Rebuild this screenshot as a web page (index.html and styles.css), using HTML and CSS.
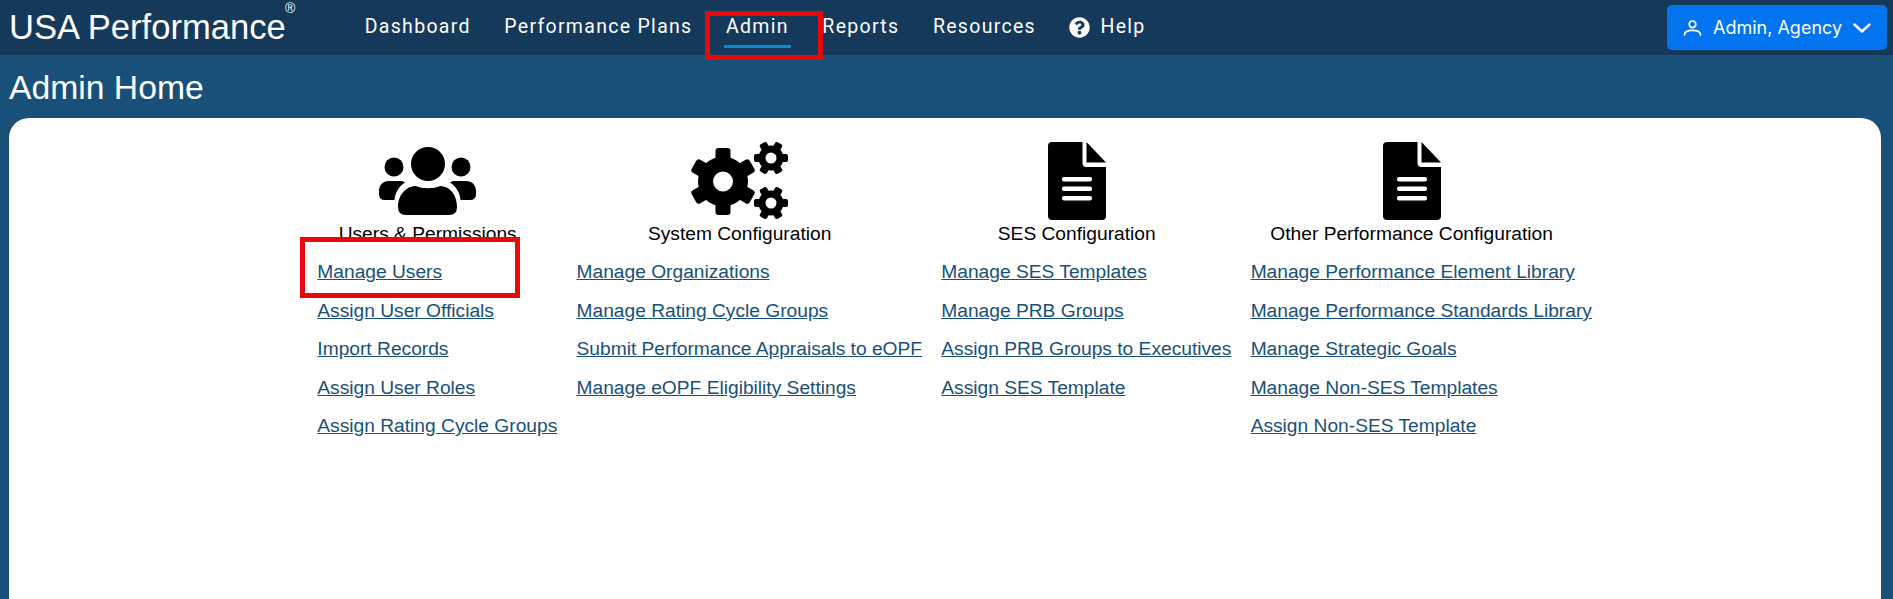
FILE: index.html
```html
<!DOCTYPE html>
<html lang="en">
<head>
    <meta charset="UTF-8">
    <title>USA Performance - Admin Home</title>
    <link rel="stylesheet" href="styles.css">
</head>
<body>
    <header class="top-bar">
        <a class="logo" href="#">USA Performance<sup>&reg;</sup></a>
        <nav class="main-nav">
            <a href="#">Dashboard</a>
            <a href="#">Performance Plans</a>
            <a href="#" class="active">Admin</a>
            <a href="#">Reports</a>
            <a href="#">Resources</a>
            <a href="#" class="help-link">
                <svg class="help-icon" viewBox="0 0 512 512"><path fill="#fff" d="M504 256c0 136.997-111.043 248-248 248S8 392.997 8 256C8 119.083 119.043 8 256 8s248 111.083 248 248zM262.655 90c-54.497 0-89.255 22.957-116.549 63.758-3.536 5.286-2.353 12.415 2.715 16.258l34.699 26.31c5.205 3.947 12.621 3.008 16.665-2.122 17.864-22.658 30.113-35.797 57.303-35.797 20.429 0 45.698 13.148 45.698 32.958 0 14.976-12.363 22.667-32.534 33.976C247.128 238.528 216 254.941 216 296v4c0 6.627 5.373 12 12 12h56c6.627 0 12-5.373 12-12v-1.333c0-28.462 83.186-29.647 83.186-106.667 0-58.002-60.165-102-116.531-102zM256 338c-25.365 0-46 20.635-46 46 0 25.364 20.635 46 46 46s46-20.636 46-46c0-25.365-20.635-46-46-46z"/></svg>
                Help
            </a>
        </nav>
        <button class="user-button">
            <svg class="user-icon" viewBox="0 0 18 16" fill="none" stroke="#fff" stroke-width="1.7" stroke-linecap="round"><circle cx="9" cy="4.3" r="3.3"/><path d="M1 15c0-3 2.6-4.6 8-4.6s8 1.600 8 4.600"/></svg>
            <span>Admin, Agency</span>
            <svg class="chevron" viewBox="0 0 18 10" fill="none" stroke="#fff" stroke-width="2.400" stroke-linecap="round" stroke-linejoin="round"><path d="M1.500 1.500 9 8.500l7.500-7"/></svg>
        </button>
    </header>

    <h1 class="page-title">Admin Home</h1>

    <main class="content-card">
        <section class="admin-col">
            <svg class="col-icon" width="97" height="80" viewBox="0 -6 97 80">
                <circle cx="49" cy="17" r="17"/>
                <circle cx="15" cy="20" r="9.500"/>
                <circle cx="82" cy="20" r="9.500"/>
                <path d="M19 60C19 48 27 39 37 39C43 42 55 42 61 39C71 39 78 48 78 60Q78 68 70 68H27Q19 68 19 60Z"/>
                <path d="M0 44C0 38 4 34 10 34H22Q25 34 26 35.500C20 39 16 46 15.500 53H6Q0 53 0 47Z"/>
                <path d="M97 44C97 38 93 34 87 34H75Q72 34 71 35.500C77 39 81 46 81.500 53H91Q97 53 97 47Z"/>
            </svg>
            <h2>Users &amp; Permissions</h2>
            <ul>
                <li><a href="#">Manage Users</a></li>
                <li><a href="#">Assign User Officials</a></li>
                <li><a href="#">Import Records</a></li>
                <li><a href="#">Assign User Roles</a></li>
                <li><a href="#">Assign Rating Cycle Groups</a></li>
            </ul>
        </section>
        <section class="admin-col">
            <svg class="col-icon" width="97" height="80" viewBox="0 0 97 80">
                <g transform="translate(32 40.500)">
                    <circle r="25"/>
                    <rect x="-7.500" y="-33.500" width="15" height="67" rx="3"/>
                    <rect x="-7.500" y="-33.500" width="15" height="67" rx="3" transform="rotate(60)"/>
                    <rect x="-7.500" y="-33.500" width="15" height="67" rx="3" transform="rotate(120)"/>
                    <circle r="10" fill="#fff"/>
                </g>
                <g transform="translate(80 17)">
                    <circle r="12.500"/>
                    <rect x="-4" y="-17" width="8" height="34" rx="2" transform="rotate(30)"/>
                    <rect x="-4" y="-17" width="8" height="34" rx="2" transform="rotate(90)"/>
                    <rect x="-4" y="-17" width="8" height="34" rx="2" transform="rotate(150)"/>
                    <circle r="5.500" fill="#fff"/>
                </g>
                <g transform="translate(80 62)">
                    <circle r="12.500"/>
                    <rect x="-4" y="-17" width="8" height="34" rx="2" transform="rotate(30)"/>
                    <rect x="-4" y="-17" width="8" height="34" rx="2" transform="rotate(90)"/>
                    <rect x="-4" y="-17" width="8" height="34" rx="2" transform="rotate(150)"/>
                    <circle r="5.500" fill="#fff"/>
                </g>
            </svg>
            <h2>System Configuration</h2>
            <ul>
                <li><a href="#">Manage Organizations</a></li>
                <li><a href="#">Manage Rating Cycle Groups</a></li>
                <li><a href="#">Submit Performance Appraisals to eOPF</a></li>
                <li><a href="#">Manage eOPF Eligibility Settings</a></li>
            </ul>
        </section>
        <section class="admin-col">
            <svg class="col-icon" width="58" height="80" viewBox="0 0 58 80">
                <path d="M4 1H34.500V22Q34.500 26 38.500 26H58V75Q58 79 54 79H4Q0 79 0 75V5Q0 1 4 1Z"/>
                <path d="M38.500 1 58 21.500H38.500Z"/>
                <rect x="14" y="36" width="30" height="4.500" rx="2" fill="#fff"/>
                <rect x="14" y="45.500" width="30" height="4.500" rx="2" fill="#fff"/>
                <rect x="14" y="55" width="30" height="4.500" rx="2" fill="#fff"/>
            </svg>
            <h2>SES Configuration</h2>
            <ul>
                <li><a href="#">Manage SES Templates</a></li>
                <li><a href="#">Manage PRB Groups</a></li>
                <li><a href="#">Assign PRB Groups to Executives</a></li>
                <li><a href="#">Assign SES Template</a></li>
            </ul>
        </section>
        <section class="admin-col">
            <svg class="col-icon" width="58" height="80" viewBox="0 0 58 80">
                <path d="M4 1H34.500V22Q34.500 26 38.500 26H58V75Q58 79 54 79H4Q0 79 0 75V5Q0 1 4 1Z"/>
                <path d="M38.500 1 58 21.500H38.500Z"/>
                <rect x="14" y="36" width="30" height="4.500" rx="2" fill="#fff"/>
                <rect x="14" y="45.500" width="30" height="4.500" rx="2" fill="#fff"/>
                <rect x="14" y="55" width="30" height="4.500" rx="2" fill="#fff"/>
            </svg>
            <h2>Other Performance Configuration</h2>
            <ul>
                <li><a href="#">Manage Performance Element Library</a></li>
                <li><a href="#">Manage Performance Standards Library</a></li>
                <li><a href="#">Manage Strategic Goals</a></li>
                <li><a href="#">Manage Non-SES Templates</a></li>
                <li><a href="#">Assign Non-SES Template</a></li>
            </ul>
        </section>
    </main>

    <!-- red callouts drawn over the page -->
    <div class="callout callout-nav"></div>
    <div class="callout callout-link"></div>
</body>
</html>
```
FILE: styles.css
```css
html, body {
    height: 100%;
}

body {
    margin: 0;
    position: relative;
    display: flex;
    flex-direction: column;
    overflow: hidden;
    background-color: #18507a;
    font-family: "Liberation Sans", Arial, sans-serif;
}

a {
    text-decoration: none;
}

.top-bar {
    display: flex;
    align-items: flex-start;
    height: 55px;
    flex-shrink: 0;
    background-color: #15395b;
}

.logo {
    position: relative;
    margin: 7px 0 0 9px;
    font-size: 34.600px;
    line-height: 40px;
    color: white;
}

.logo sup {
    position: absolute;
    top: -7px;
    left: 276px;
    font-size: 14px;
    line-height: 16px;
}

.main-nav {
    display: flex;
    margin-left: 77px;
    gap: 29.500px;
    font-family: Roboto, sans-serif;
}

.main-nav a {
    display: flex;
    align-items: flex-start;
    height: 48px;
    box-sizing: border-box;
    padding: 15px 2px 0;
    border-bottom: 3px solid transparent;
    font-size: 19.500px;
    line-height: 24px;
    letter-spacing: 1.300px;
    color: white;
}

.main-nav a.active {
    border-bottom-color: #0a8ad0;
}

.help-icon {
    width: 21px;
    height: 21px;
    margin: 2px 10px 0 0;
}

.user-button {
    display: flex;
    align-items: center;
    margin: 5px 6px 0 auto;
    width: 220px;
    height: 45px;
    padding: 0 0 0 16px;
    border: none;
    border-radius: 5px;
    background-color: #0274f0;
    color: white;
    font-family: Inter, sans-serif;
    font-size: 18px;
}

.user-icon {
    width: 19px;
    height: 16px;
    margin-right: 11px;
}

.chevron {
    width: 18px;
    height: 10px;
    margin-left: 11px;
}

.page-title {
    margin: 0;
    height: 63px;
    box-sizing: border-box;
    padding: 13px 0 0 9px;
    flex-shrink: 0;
    font-size: 33.700px;
    line-height: 38px;
    font-weight: normal;
    color: white;
}

.content-card {
    flex: 1;
    display: flex;
    justify-content: center;
    margin: 0 12px 0 9px;
    padding-top: 23px;
    border-radius: 20px 20px 0 0;
    background-color: white;
}

.admin-col {
    display: flex;
    flex-direction: column;
    align-items: center;
}

.col-icon {
    display: block;
    height: 80px;
}

.admin-col h2 {
    margin: 2px 0 9.400px;
    font-size: 19.200px;
    line-height: 21px;
    font-weight: normal;
    color: black;
}

.admin-col ul {
    align-self: stretch;
    list-style: none;
    margin: 0;
    padding-left: 19.250px;
}

.admin-col li {
    font-size: 19.200px;
    line-height: 38.400px;
}

.admin-col li a {
    color: #18507a;
    text-decoration: underline;
}

.callout {
    position: absolute;
    box-sizing: border-box;
    border: 5px solid #e80a0a;
}

.callout-nav {
    left: 705px;
    top: 11px;
    width: 118px;
    height: 49px;
}

.callout-link {
    left: 300px;
    top: 237px;
    width: 220px;
    height: 61px;
}
```
